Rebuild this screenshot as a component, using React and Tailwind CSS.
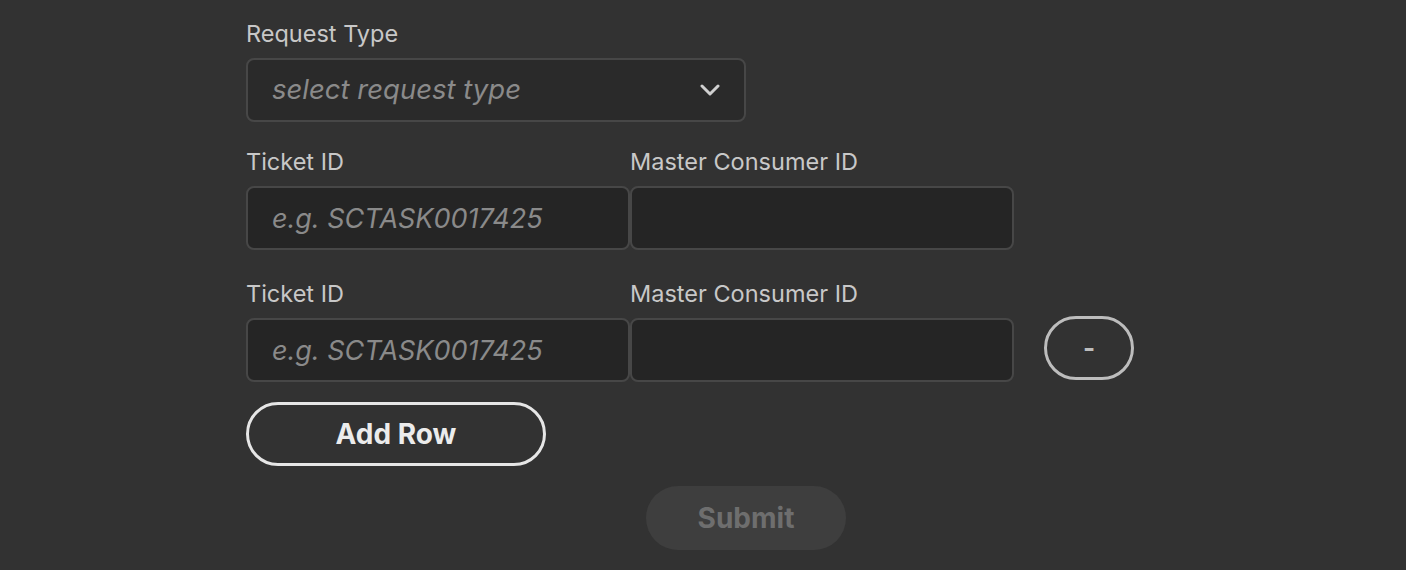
import React from "react";

const font = { fontFamily: "Inter, 'Noto Sans', sans-serif" };

const Label = ({ children, className = "" }) => (
  <div className={"h-8 leading-8 text-[23.5px] text-[#c8c8c8] mb-2 " + className}>{children}</div>
);

const TextInput = ({ placeholder }) => (
  <input
    placeholder={placeholder}
    className="h-16 w-[384px] rounded-lg border-2 border-[#474747] bg-[#252525] px-6 text-[27px] italic text-[#d0d0d0] placeholder:text-[#8a8a8a] outline-none"
  />
);

const Row = ({ removable }) => (
  <div className="flex items-end">
    <div className="flex flex-col w-[384px]">
      <Label>Ticket ID</Label>
      <TextInput placeholder="e.g. SCTASK0017425" />
    </div>
    <div className="flex flex-col w-[384px]">
      <Label>Master Consumer ID</Label>
      <TextInput placeholder="" />
    </div>
    {removable && (
      <button className="ml-[30px] mb-[2px] h-16 w-[90px] rounded-full border-[3px] border-[#bdbdbd] text-[26px] font-bold text-[#bdbdbd] leading-none">
        -
      </button>
    )}
  </div>
);

export default function App() {
  return (
    <div className="min-h-screen bg-[#323232] pt-[18px]" style={font}>
      <div className="ml-[246px] w-[1000px] flex flex-col">
        <Label>Request Type</Label>
        <div className="flex h-16 w-[500px] items-center justify-between rounded-lg border-2 border-[#474747] bg-[#2a2a2a] pl-6 pr-6">
          <span className="text-[27.5px] italic text-[#8a8a8a]">select request type</span>
          <svg width="20" height="12" viewBox="0 0 20 12" fill="none">
            <path d="M2 2l8 8 8-8" stroke="#d0d0d0" strokeWidth="3" strokeLinecap="round" strokeLinejoin="round" />
          </svg>
        </div>
        <div className="mt-[24px]">
          <Row />
        </div>
        <div className="mt-[28px]">
          <Row removable />
        </div>
        <button className="mt-[20px] h-16 w-[300px] rounded-full border-[3px] border-[#e6e6e6] text-[28px] font-bold text-[#ececec]">
          Add Row
        </button>
        <div className="mt-[20px] flex justify-center">
          <button className="h-16 w-[200px] rounded-full bg-[#3e3e3e] text-[28px] font-bold text-[#6e6e6e]">
            Submit
          </button>
        </div>
      </div>
    </div>
  );
}
